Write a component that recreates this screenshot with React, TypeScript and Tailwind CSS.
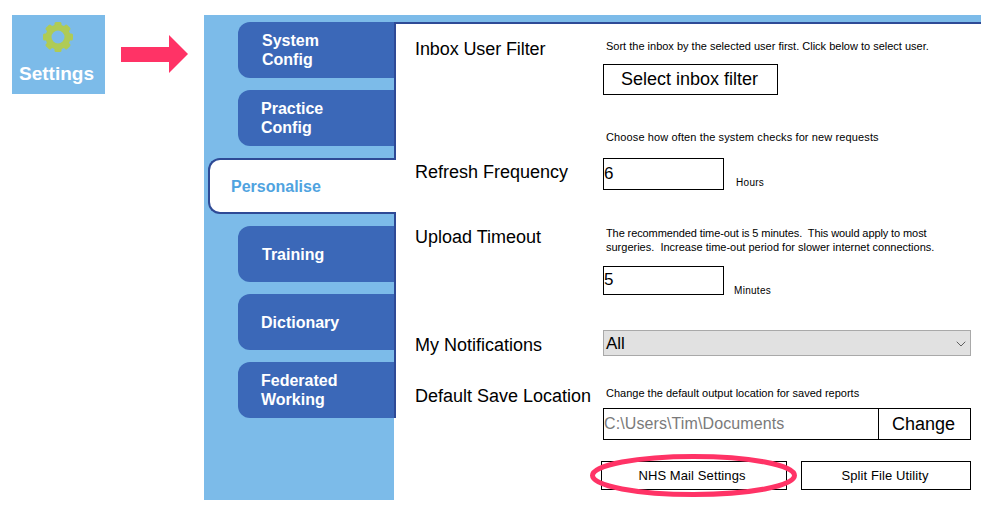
import { ChevronDown } from "lucide-react";

const tabs = [
  { label: ["System", "Config"], pad: "pl-6" },
  { label: ["Practice", "Config"], pad: "pl-[23px]" },
  { label: ["Personalise"], active: true },
  { label: ["Training"], pad: "pl-6" },
  { label: ["Dictionary"], pad: "pl-[23px]" },
  { label: ["Federated", "Working"], pad: "pl-[23px]" },
];

function Gear() {
  const teeth = [0, 45, 90, 135, 180, 225, 270, 315];
  return (
    <svg width="30" height="30" viewBox="0 0 30 30">
      {teeth.map((deg) => (
        <rect
          key={deg}
          x="11.5"
          y="0"
          width="7"
          height="6"
          rx="1.5"
          fill="#afcb55"
          transform={`rotate(${deg} 15 15)`}
        />
      ))}
      <circle cx="15" cy="15" r="9.5" fill="none" stroke="#afcb55" strokeWidth="6" />
    </svg>
  );
}

function SideTab({ tab }: { tab: (typeof tabs)[number] }) {
  if (tab.active) {
    return (
      <div className="-mr-[2px] ml-1 flex h-14 items-center rounded-l-xl border-y-2 border-l-2 border-[#2e4a96] bg-white pt-[2px] pl-[21px] text-base font-bold text-[#4fa3e0]">
        Personalise
      </div>
    );
  }
  return (
    <div
      className={`ml-[34px] flex h-14 flex-col justify-center rounded-l-xl bg-[#3b68b8] text-base leading-[19px] font-bold text-white ${tab.pad}`}
    >
      {tab.label.map((line) => (
        <span key={line}>{line}</span>
      ))}
    </div>
  );
}

function Label({ text, className }: { text: string; className: string }) {
  return <div className={`w-[188px] text-[18px] leading-5 text-black ${className}`}>{text}</div>;
}

export default function App() {
  return (
    <div className="flex h-[525px] w-[1003px] items-start overflow-hidden bg-white font-['Liberation_Sans',Arial,sans-serif]">
      <div className="mt-[15px] ml-3 flex h-[79px] w-[93px] flex-col items-center bg-[#7cbbe9] pt-[7px] pr-[2px]">
        <Gear />
        <span className="mt-[10px] mr-[2px] text-[19px] leading-6 font-bold text-white">Settings</span>
      </div>

      <svg className="mt-[35px] ml-4" width="67" height="38" viewBox="0 0 67 38">
        <polygon points="0,12 48,12 48,0 67,19 48,38 48,27 0,27" fill="#ff3366" />
      </svg>

      <div className="mt-[15px] ml-4 flex h-[485px] w-[777px] bg-[#7cbbe9] pt-[7px]">
        <div className="w-[190px] shrink-0">
          <div className="relative z-10 flex h-[396px] w-[192px] flex-col gap-3 border-r-2 border-[#2e4a96]">
            {tabs.map((tab) => (
              <SideTab key={tab.label[0]} tab={tab} />
            ))}
          </div>
        </div>

        <div className="flex-1 border-t-2 border-[#2e4a96] bg-white pl-[21px] text-black">
          <div className="flex h-[101px]">
            <Label text="Inbox User Filter" className="mt-[15px] tracking-[-0.1px]" />
            <div className="pt-[15px]">
              <p className="pl-[3px] text-[11px] leading-[14px]">
                Sort the inbox by the selected user first. Click below to select user.
              </p>
              <button className="mt-[11px] h-[31px] w-[175px] border border-black pr-[2px] text-[18px]">
                Select inbox filter
              </button>
            </div>
          </div>

          <div className="flex h-[101px]">
            <Label text="Refresh Frequency" className="mt-[37px]" />
            <div className="pt-[5px]">
              <p className="pl-[3px] text-[11px] leading-[14px] tracking-[0.12px]">
                Choose how often the system checks for new requests
              </p>
              <div className="mt-[14px] flex items-end">
                <input
                  readOnly
                  value="6"
                  className="h-8 w-[121px] border border-black text-[17px] outline-none"
                />
                <span className="mb-[1px] ml-3 text-[10px] leading-3 tracking-[0.3px]">Hours</span>
              </div>
            </div>
          </div>

          <div className="flex h-[104px]">
            <Label text="Upload Timeout" className="mt-[1px]" />
            <div>
              <p className="w-[345px] pl-[3px] text-[11px] leading-[14px]">
                <span className="tracking-[-0.1px]">
                  The recommended time-out is 5 minutes.&nbsp; This would apply to most
                </span>{" "}
                surgeries.&nbsp; Increase time-out period for slower internet connections.
              </p>
              <div className="mt-3 flex items-end">
                <input
                  readOnly
                  value="5"
                  className="h-[29px] w-[121px] border border-black pb-[2px] text-[17px] outline-none"
                />
                <span className="mb-[-2px] ml-[10px] text-[10px] leading-3 tracking-[0.3px]">Minutes</span>
              </div>
            </div>
          </div>

          <div className="flex h-[56px]">
            <Label text="My Notifications" className="mt-[5px]" />
            <div className="flex h-[26px] w-[368px] items-center justify-between border border-[#a9a9a9] bg-[#e1e1e1] pt-[2px] pr-[1px] pl-[2px] text-[17px]">
              <span>All</span>
              <ChevronDown size={16} strokeWidth={1.25} className="text-[#444444]" />
            </div>
          </div>

          <div className="flex h-[75px]">
            <Label text="Default Save Location" className="" />
            <div>
              <p className="pl-[3px] text-[11px] leading-[14px]">
                Change the default output location for saved reports
              </p>
              <div className="mt-2 flex h-8 w-[368px] border border-black">
                <input
                  readOnly
                  value="C:\Users\Tim\Documents"
                  className="w-[275px] border-r border-black text-[16px] tracking-[0.1px] text-[#7a7a7a] outline-none"
                />
                <button className="flex-1 pr-[2px] text-[18px]">Change</button>
              </div>
            </div>
          </div>

          <div className="ml-[186px] flex gap-[14px]">
            <button className="relative h-[29px] w-[186px] border border-black pr-1 text-[13px] tracking-[0.1px]">
              NHS Mail Settings
              <svg
                className="absolute -top-2 -left-3 overflow-visible"
                width="207"
                height="43"
                viewBox="0 0 207 43"
              >
                <ellipse cx="103.5" cy="21.5" rx="101" ry="19" fill="none" stroke="#ff3366" strokeWidth="5" />
              </svg>
            </button>
            <button className="h-[29px] w-[170px] border border-black pr-[2px] text-[13px] tracking-[0.1px]">
              Split File Utility
            </button>
          </div>
        </div>
      </div>
    </div>
  );
}
